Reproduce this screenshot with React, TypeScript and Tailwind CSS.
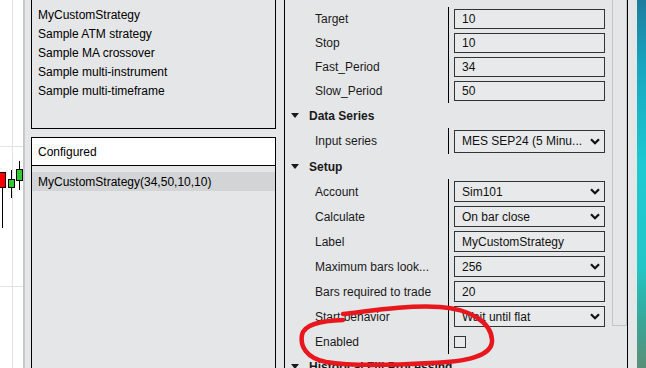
import type { ReactNode } from "react"

const font = "font-['Liberation_Sans',Arial,sans-serif]"

function Chevron() {
  return (
    <svg width="10" height="7" viewBox="0 0 10 7" className="shrink-0">
      <polyline points="1,1.2 5,5.2 9,1.2" fill="none" stroke="#111" strokeWidth="2.2" />
    </svg>
  )
}

function Triangle() {
  return (
    <svg width="8" height="5" viewBox="0 0 8 5" className="shrink-0">
      <polygon points="0,0 8,0 4,5" fill="#1a1a1a" />
    </svg>
  )
}

function TextBox({ value, h = 20 }: { value: string; h?: number }) {
  return (
    <div
      className={`flex w-[151px] items-center border border-[#333] bg-[#e8e9ea] pl-[7px] text-[#111] ${h === 20 ? "h-[20px]" : "h-[21px]"}`}
    >
      {value}
    </div>
  )
}

function Select({ value, h = 21 }: { value: string; h?: number }) {
  return (
    <div
      className={`flex w-[151px] items-center justify-between border border-[#333] bg-[#e8e9ea] pl-[7px] pr-[4px] text-[#111] ${h === 23 ? "h-[23px]" : "h-[21px]"}`}
    >
      <span className="whitespace-nowrap">{value}</span>
      <Chevron />
    </div>
  )
}

function Row({ label, h, children }: { label: string; h: string; children: ReactNode }) {
  return (
    <div className={`flex ${h}`}>
      <div className="flex w-[163px] items-center whitespace-nowrap pl-[30px] text-[#1a1a1a]">{label}</div>
      <div className="flex flex-1 items-center border-l border-black pl-[5px]">{children}</div>
    </div>
  )
}

function Category({ title }: { title: string }) {
  return (
    <div className="flex h-[25px] items-center gap-[10px] pl-[6px] font-bold text-[#1a1a1a]">
      <Triangle />
      <span className="whitespace-nowrap">{title}</span>
    </div>
  )
}

function Chart() {
  return (
    <svg width="23" height="368" viewBox="0 0 23 368" className="shrink-0 bg-white">
      <line x1="12.5" y1="0" x2="12.5" y2="368" stroke="#e4e4e4" />
      <line x1="0" y1="146.5" x2="23" y2="146.5" stroke="#e4e4e4" />
      <line x1="0" y1="286.5" x2="23" y2="286.5" stroke="#e4e4e4" />
      <line x1="2.5" y1="188" x2="2.5" y2="228" stroke="#000" />
      <rect x="-1.5" y="172.5" width="7" height="15" fill="#ff0000" stroke="#000" />
      <line x1="11.5" y1="170" x2="11.5" y2="198" stroke="#000" />
      <rect x="8.5" y="179.5" width="6" height="8" fill="#2ecc2e" stroke="#000" />
      <line x1="19.5" y1="161" x2="19.5" y2="190" stroke="#000" />
      <rect x="16.5" y="169.5" width="6" height="11" fill="#2ecc2e" stroke="#000" />
    </svg>
  )
}

export default function App() {
  const strategies = [
    "MyCustomStrategy",
    "Sample ATM strategy",
    "Sample MA crossover",
    "Sample multi-instrument",
    "Sample multi-timeframe",
  ]

  return (
    <div className={`relative flex h-[368px] w-[646px] overflow-hidden bg-[#e5e6e8] text-[12px] ${font}`}>
      <Chart />

      <div className="flex flex-1 border-l-2 border-[#c9c9c9] pl-[6px]">
        {/* strategy lists */}
        <div className="flex w-[245px] flex-col">
          <div className="h-[129px] border-x border-b border-black pl-[6px] pt-[5px] text-black">
            {strategies.map((s) => (
              <div key={s} className="flex h-[19px] items-center whitespace-nowrap">
                {s}
              </div>
            ))}
          </div>
          <div className="mt-[8px] flex flex-1 flex-col border-x border-t border-black">
            <div className="flex h-[28px] items-center border-b border-black bg-white pl-[6px] text-black">
              Configured
            </div>
            <div className="mt-[6px] flex h-[19px] items-center bg-[#d3d4d6] pl-[6px] text-black">
              MyCustomStrategy(34,50,10,10)
            </div>
          </div>
        </div>

        {/* property grid */}
        <div className="ml-[8px] flex w-[344px] border-x border-black">
          <div className="w-[327px] pt-[7px]">
            <Row label="Target" h="h-[24px]"><TextBox value="10" /></Row>
            <Row label="Stop" h="h-[24px]"><TextBox value="10" /></Row>
            <Row label="Fast_Period" h="h-[24px]"><TextBox value="34" /></Row>
            <Row label="Slow_Period" h="h-[24px]"><TextBox value="50" /></Row>
            <Category title="Data Series" />
            <Row label="Input series" h="h-[26px]"><Select value="MES SEP24 (5 Minu..." h={23} /></Row>
            <Category title="Setup" />
            <Row label="Account" h="h-[25px]"><Select value="Sim101" /></Row>
            <Row label="Calculate" h="h-[25px]"><Select value="On bar close" /></Row>
            <Row label="Label" h="h-[25px]"><TextBox value="MyCustomStrategy" h={21} /></Row>
            <Row label="Maximum bars look..." h="h-[25px]"><Select value="256" /></Row>
            <Row label="Bars required to trade" h="h-[25px]"><TextBox value="20" h={21} /></Row>
            <Row label="Start behavior" h="h-[25px]"><Select value="Wait until flat" /></Row>
            <Row label="Enabled" h="h-[25px]">
              <div className="h-[12px] w-[12px] border border-[#333] bg-[#e8e9ea]" />
            </Row>
            <Category title="Historical Fill Processing" />
          </div>
          <div className="w-[15px]">
            <div className="h-[326px] border-x border-b border-[#c4c4c4]" />
          </div>
        </div>

        <div className="w-[9px]" />
        <div className="w-[9px] bg-[linear-gradient(180deg,#1e7c9e_0%,#17a6c0_18%,#1ccad2_45%,#22c6c8_72%,#3aa596_88%,#5b8f78_100%)]" />
      </div>

      {/* hand-drawn annotation */}
      <svg className="pointer-events-none absolute inset-0" width="646" height="368" viewBox="0 0 646 368">
        <path
          d="M 343 314 C 370 311, 405 305, 440 307 C 470 309, 491 322, 492 340 C 493 356, 466 362, 430 363 C 395 365, 350 366, 326 362 C 306 358, 300 346, 302 335 C 304 325, 318 321, 343 320"
          fill="none"
          stroke="#e8171d"
          strokeWidth="4.5"
          strokeLinecap="round"
          strokeLinejoin="round"
        />
      </svg>
    </div>
  )
}
